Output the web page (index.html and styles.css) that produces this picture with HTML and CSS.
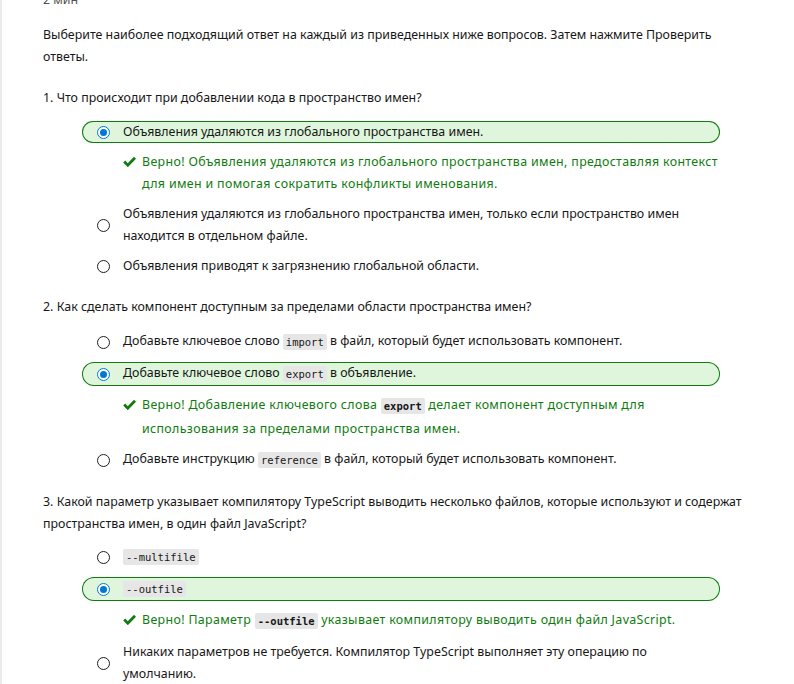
FILE: index.html
```html
<!DOCTYPE html>
<html lang="ru">
<head>
<meta charset="utf-8">
<link rel="stylesheet" href="styles.css">
</head>
<body>
<div class="page">
  <div class="content">
    <div class="duration">2 мин</div>
    <p class="intro">Выберите наиболее подходящий ответ на каждый из приведенных ниже вопросов. Затем нажмите Проверить ответы.</p>

    <div class="question">
      <p class="q-title">1. Что происходит при добавлении кода в пространство имен?</p>
      <ul class="options">
        <li class="option selected"><span class="radio on"></span><span class="label">Объявления удаляются из глобального пространства имен.</span></li>
        <li class="feedback"><span class="check"><svg width="13" height="11" viewBox="0 0 13 11"><path d="M1.2 5.6 L4.8 9.2 L12 1.8" fill="none" stroke="#107c10" stroke-width="2.8"/></svg></span><span class="fb-text">Верно! Объявления удаляются из глобального пространства имен, предоставляя контекст для имен и помогая сократить конфликты именования.</span></li>
        <li class="option"><span class="radio"></span><span class="label">Объявления удаляются из глобального пространства имен, только если пространство имен находится в отдельном файле.</span></li>
        <li class="option"><span class="radio"></span><span class="label">Объявления приводят к загрязнению глобальной области.</span></li>
      </ul>
    </div>

    <div class="question">
      <p class="q-title">2. Как сделать компонент доступным за пределами области пространства имен?</p>
      <ul class="options">
        <li class="option"><span class="radio"></span><span class="label">Добавьте ключевое слово <code>import</code> в файл, который будет использовать компонент.</span></li>
        <li class="option selected"><span class="radio on"></span><span class="label">Добавьте ключевое слово <code>export</code> в объявление.</span></li>
        <li class="feedback"><span class="check"><svg width="13" height="11" viewBox="0 0 13 11"><path d="M1.2 5.6 L4.8 9.2 L12 1.8" fill="none" stroke="#107c10" stroke-width="2.8"/></svg></span><span class="fb-text">Верно! Добавление ключевого слова <code>export</code> делает компонент доступным для использования за пределами пространства имен.</span></li>
        <li class="option"><span class="radio"></span><span class="label">Добавьте инструкцию <code>reference</code> в файл, который будет использовать компонент.</span></li>
      </ul>
    </div>

    <div class="question">
      <p class="q-title">3. Какой параметр указывает компилятору TypeScript выводить несколько файлов, которые используют и содержат пространства имен, в один файл JavaScript?</p>
      <ul class="options compact">
        <li class="option"><span class="radio"></span><span class="label"><code>--multifile</code></span></li>
        <li class="option selected"><span class="radio on"></span><span class="label"><code>--outfile</code></span></li>
        <li class="feedback"><span class="check"><svg width="13" height="11" viewBox="0 0 13 11"><path d="M1.2 5.6 L4.8 9.2 L12 1.8" fill="none" stroke="#107c10" stroke-width="2.8"/></svg></span><span class="fb-text">Верно! Параметр <code>--outfile</code> указывает компилятору выводить один файл JavaScript.</span></li>
        <li class="option"><span class="radio"></span><span class="label">Никаких параметров не требуется. Компилятор TypeScript выполняет эту операцию по умолчанию.</span></li>
      </ul>
    </div>
  </div>
</div>
</body>
</html>
```

FILE: styles.css
```css
html, body {
  margin: 0;
  padding: 0;
  background: #ffffff;
}
body {
  font-family: "Noto Sans", "Open Sans", sans-serif;
  font-size: 12.4px;
  line-height: 22px;
  color: #171717;
}
.page {
  border-left: 2px solid #ebebeb;
  box-sizing: border-box;
  overflow: hidden;
  height: 684px;
}
.content {
  width: 712px;
  padding-left: 41px;
  margin-top: -10px;
}
.duration {
  color: #505050;
  line-height: 20px;
}
.intro {
  margin: 14px 0 0 0;
}
.question {
  margin-top: 19px;
}
.q-title {
  margin: 0;
}
.options {
  list-style: none;
  margin: 12px 0 0 39px;
  padding: 0;
  width: 638px;
  display: flex;
  flex-direction: column;
  gap: 8px;
}
.options.compact {
  margin-top: 10px;
}
.option {
  display: flex;
  align-items: center;
  border-radius: 12px;
  padding: 0 24px 0 15px;
  min-height: 22px;
}
.option.selected {
  background: #dff6dd;
  box-shadow: inset 0 0 0 1px #107c10;
}
.radio {
  flex: none;
  width: 13px;
  height: 13px;
  box-sizing: border-box;
  border: 1px solid #1f1f1f;
  border-radius: 50%;
  margin-right: 13px;
  position: relative;
}
.radio.on {
  border-color: #0078d4;
  background: #ffffff;
}
.radio.on::after {
  content: "";
  position: absolute;
  left: 2px;
  top: 2px;
  width: 7px;
  height: 7px;
  border-radius: 50%;
  background: #0078d4;
}
.label {
  flex: 1;
}
.feedback {
  display: flex;
  align-items: flex-start;
  color: #107c10;
  padding-left: 41px;
  letter-spacing: 0.35px;
}
.check {
  flex: none;
  display: flex;
  width: 19px;
  padding-top: 5px;
}
.fb-text {
  flex: 1;
  margin-right: -8px;
}
code {
  display: inline-block;
  font-family: "DejaVu Sans Mono", "Liberation Mono", monospace;
  font-size: 10.5px;
  line-height: 16px;
  background: #e6e6e6;
  border-radius: 2px;
  padding: 0 3px;
  margin: 4px 0;
  vertical-align: middle;
  color: #171717;
  letter-spacing: 0;
}
.feedback code {
  font-weight: bold;
}
```
